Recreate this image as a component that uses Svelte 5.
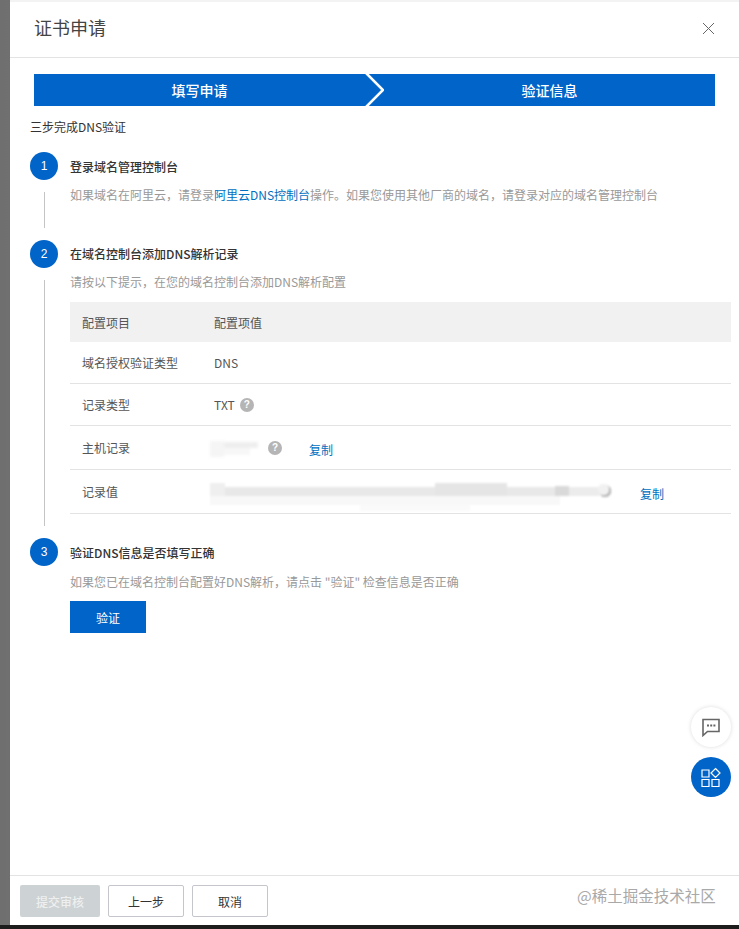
<script>
  const rows = [
    { name: '域名授权验证类型', value: 'DNS' },
    { name: '记录类型', value: 'TXT', help: true },
    { name: '主机记录', smear: 'host', help: true, copy: true },
    { name: '记录值', smear: 'long', copy: true }
  ];
</script>

<div class="page">
  <div class="panel">
    <header class="head">
      <h1>证书申请</h1>
      <svg class="close" width="13" height="13" viewBox="0 0 13 13" aria-label="关闭">
        <path d="M1 1l11 11M12 1L1 12" stroke="#666" stroke-width="1" fill="none" />
      </svg>
    </header>

    <main class="body">
      <div class="steps">
        <span>填写申请</span>
        <svg class="chevron" width="19" height="32" viewBox="0 0 19 32">
          <path d="M1 -1L18 16L1 33" stroke="#fff" stroke-width="2.6" fill="none" />
        </svg>
        <span>验证信息</span>
      </div>

      <p class="intro">三步完成DNS验证</p>

      <section class="step one">
        <div class="rail"><b>1</b><i></i></div>
        <div class="content">
          <h2>登录域名管理控制台</h2>
          <p>如果域名在阿里云，请登录<a href="#dns">阿里云DNS控制台</a>操作。如果您使用其他厂商的域名，请登录对应的域名管理控制台</p>
        </div>
      </section>

      <section class="step two">
        <div class="rail"><b>2</b><i></i></div>
        <div class="content">
          <h2>在域名控制台添加DNS解析记录</h2>
          <p>请按以下提示，在您的域名控制台添加DNS解析配置</p>
          <div class="table">
            <div class="row th">
              <div class="c1">配置项目</div>
              <div class="c2">配置项值</div>
            </div>
            {#each rows as row}
              <div class="row">
                <div class="c1">{row.name}</div>
                <div class="c2">
                  {#if row.value}<span>{row.value}</span>{/if}
                  {#if row.smear === 'host'}
                    <span class="smear host"></span>
                  {:else if row.smear === 'long'}
                    <span class="smear long"></span>
                  {/if}
                  {#if row.help}<em class="help">?</em>{/if}
                  {#if row.copy}<a class="copy" href="#copy">复制</a>{/if}
                </div>
              </div>
            {/each}
          </div>
        </div>
      </section>

      <section class="step three">
        <div class="rail"><b>3</b></div>
        <div class="content">
          <h2>验证DNS信息是否填写正确</h2>
          <p>如果您已在域名控制台配置好DNS解析，请点击 "验证" 检查信息是否正确</p>
          <button class="verify">验证</button>
        </div>
      </section>
    </main>

    <footer class="foot">
      <button class="btn off">提交审核</button>
      <button class="btn">上一步</button>
      <button class="btn">取消</button>
    </footer>

    <div class="float chat">
      <svg width="20" height="20" viewBox="0 0 20 20">
        <path d="M2 2.500h16v12H6.500L2 18.500z" fill="none" stroke="#666" stroke-width="1.6" />
        <path d="M6 8.500h2M9.200 8.500h2M12.400 8.500h2" stroke="#666" stroke-width="1.8" />
      </svg>
    </div>
    <div class="float apps">
      <svg width="20" height="20" viewBox="0 0 20 20">
        <path d="M1 3h7v7H1zM1 12.500h7v7H1zM11 12.500h7v7h-7zM14.500 1.500l4.500 4.500-4.500 4.500L10 6z" fill="none" stroke="#fff" stroke-width="1.2" />
      </svg>
    </div>
    <div class="mark">@稀土掘金技术社区</div>
  </div>
</div>

<style>
  :global(body) {
    margin: 0;
    background: #1d1d1d;
    font-family: "Noto Sans CJK SC", "Liberation Sans", sans-serif;
  }
  .page {
    width: 739px;
    height: 929px;
    box-sizing: border-box;
    padding-bottom: 4px;
    background: linear-gradient(#1d1d1d, #1d1d1d) bottom / 100% 4px no-repeat,
      linear-gradient(90deg, #6f6f6f, #8c8c8c 60%, #5d5d5d);
    overflow: hidden;
  }
  .panel {
    position: relative;
    margin-left: 10px;
    height: 925px;
    display: flex;
    flex-direction: column;
    background: #fff;
    border-top: 2px solid #f3f3f3;
    box-sizing: border-box;
  }
  .head {
    height: 56px;
    flex: none;
    box-sizing: border-box;
    border-bottom: 1px solid #e3e3e3;
    display: flex;
    align-items: center;
    justify-content: space-between;
    padding: 0 24px 3px 24px;
  }
  h1 {
    margin: -2px 0 0;
    font-size: 18px;
    font-weight: 400;
    color: #444;
  }
  .body {
    flex: 1;
    padding: 16px 8px 0 20px;
  }
  .steps {
    margin: 0 16px 0 4px;
    height: 32px;
    display: flex;
    background: #0064c8;
    color: #fff;
    font-size: 14px;
    font-weight: 500;
    line-height: 32px;
    text-align: center;
  }
  .steps span {
    flex: 1;
  }
  .chevron {
    flex: none;
    display: block;
  }
  .intro {
    margin: 11px 0 0;
    font-size: 12px;
    line-height: 20px;
    color: #333;
  }
  .step {
    display: flex;
    gap: 12px;
  }
  .one {
    margin-top: 15px;
    height: 88px;
  }
  .two {
    height: 298px;
  }
  .rail {
    width: 28px;
    flex: none;
    display: flex;
    flex-direction: column;
    align-items: center;
  }
  .rail b {
    width: 28px;
    height: 28px;
    flex: none;
    border-radius: 50%;
    background: #0064c8;
    color: #fff;
    font: 500 12px/28px "Liberation Sans", sans-serif;
    text-align: center;
  }
  .rail i {
    width: 1px;
    background: #c4c4c4;
    margin: 12px 0;
    flex: 1;
  }
  .one .rail i {
    flex: none;
    height: 36px;
  }
  h2 {
    margin: 0;
    padding-top: 5px;
    font-size: 12px;
    line-height: 20px;
    font-weight: 500;
    color: #333;
  }
  .two h2 {
    padding-top: 4px;
  }
  .content {
    flex: 1;
    min-width: 0;
  }
  .content p {
    margin: 8px 0 0;
    font-size: 12px;
    line-height: 20px;
    color: #999;
    white-space: nowrap;
  }
  .content p a {
    color: #0070c0;
    text-decoration: none;
  }
  .table {
    margin-top: 10px;
    font-size: 12px;
    color: #555;
  }
  .row {
    display: flex;
    align-items: center;
    height: 43px;
    box-sizing: border-box;
    border-bottom: 1px solid #e3e3e3;
    padding-left: 12px;
  }
  .row:nth-child(3) {
    height: 42px;
  }
  .row:nth-child(4),
  .row:nth-child(5) {
    height: 44px;
  }
  .th {
    height: 40px;
    background: #f1f1f1;
    border-bottom: 0;
  }
  .row:nth-child(2) {
    height: 42px;
  }
  .c1 {
    width: 132px;
    flex: none;
  }
  .c2 {
    display: flex;
    align-items: center;
  }
  .help {
    width: 14px;
    height: 14px;
    margin-left: 5px;
    border-radius: 50%;
    background: #b5b5b5;
    color: #fff;
    font: 700 10px/14px "Liberation Sans", sans-serif;
    text-align: center;
  }
  .smear {
    display: block;
    margin-left: -4px;
  }
  .host {
    width: 48px;
    height: 16px;
    margin-top: 3px;
    filter: blur(1.5px);
    background:
      linear-gradient(#eeeeee, #eeeeee) 14px 1px / 34px 6px no-repeat,
      linear-gradient(#f5f5f5, #f5f5f5) 0 0 / 14px 16px no-repeat,
      linear-gradient(#f7f7f7, #f7f7f7) 14px 7px / 26px 7px no-repeat;
  }
  .host + .help {
    margin-left: 10px;
  }
  .long {
    width: 402px;
    height: 30px;
    margin-top: 9px;
    filter: blur(1.2px);
    background:
      radial-gradient(circle at 393.5px 8.5px, #f1f1f1 0 5.5px, transparent 6px),
      radial-gradient(circle at 395px 10px, #b5b5b5 0 6px, transparent 6.500px),
      linear-gradient(#d9d9d9, #d9d9d9) 345px 5px / 14px 10px no-repeat,
      linear-gradient(#ececec, #ececec) 359px 6px / 30px 9px no-repeat,
      linear-gradient(#e5e5e5, #e5e5e5) 225px 2px / 72px 13px no-repeat,
      linear-gradient(#e8e8e8, #e8e8e8) 15px 6px / 330px 9px no-repeat,
      linear-gradient(#efefef, #efefef) 0 2px / 15px 13px no-repeat,
      linear-gradient(#f8f8f8, #f8f8f8) 0 15px / 350px 9px no-repeat,
      linear-gradient(#fafafa, #fafafa) 150px 24px / 110px 6px no-repeat;
  }
  .copy {
    color: #0070c0;
    text-decoration: none;
    margin-left: 27px;
    margin-top: 3px;
  }
  .long + .copy {
    margin-left: 28px;
  }
  .three .content p {
    margin-top: 9px;
  }
  .verify {
    display: block;
    margin-top: 9px;
    width: 76px;
    height: 32px;
    border: 0;
    background: #0064c8;
    color: #fff;
    font: 12px "Noto Sans CJK SC", sans-serif;
  }
  .foot {
    flex: none;
    height: 50px;
    box-sizing: border-box;
    border-top: 1px solid #e3e3e3;
    padding: 9px 0 0 10px;
    display: flex;
    gap: 8px;
    align-items: flex-start;
  }
  .btn {
    width: 76px;
    height: 32px;
    box-sizing: border-box;
    border: 1px solid #c4c6cc;
    border-radius: 2px;
    background: #fff;
    color: #333;
    font: 12px "Noto Sans CJK SC", sans-serif;
  }
  .off {
    width: 80px;
    border: 0;
    background: #cdd2d4;
    color: #eef0f0;
    font-weight: 500;
  }
  .float {
    position: absolute;
    left: 681px;
    width: 40px;
    height: 40px;
    border-radius: 50%;
    display: flex;
    align-items: center;
    justify-content: center;
  }
  .chat {
    top: 705px;
    background: #fff;
    box-shadow: 0 0 4px rgba(0, 0, 0, 0.14);
  }
  .apps {
    top: 755px;
    background: #0064c8;
  }
  .mark {
    position: absolute;
    left: 567px;
    bottom: 19px;
    font-size: 15.5px;
    line-height: 22px;
    color: #a9a9a9;
  }
</style>
